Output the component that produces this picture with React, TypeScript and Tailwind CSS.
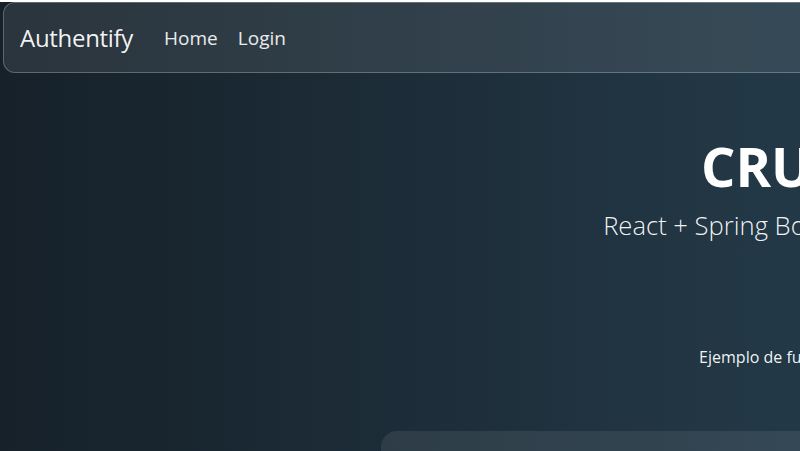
import React from 'react';

const font = { fontFamily: '"Open Sans", "Noto Sans", sans-serif' };

function Navbar() {
  return (
    <nav className="mx-[3px] mt-[2px] h-[71px] rounded-xl border border-white/25 bg-white/[0.09] flex items-center px-4">
      <span className="text-[24px] text-white/95 tracking-[-0.3px]">Authentify</span>
      <div className="flex items-center ml-[21px] pt-[1px]">
        <a className="px-[10px] text-[19px] font-medium text-white/90">Home</a>
        <a className="px-[10px] text-[19px] font-medium text-white/90">Login</a>
      </div>
    </nav>
  );
}

export default function App() {
  return (
    <div className="w-screen h-screen overflow-hidden" style={font}>
      <div className="w-[1920px] min-h-[451px] bg-gradient-to-r from-[#16212a] via-[#233846] via-40% to-[#2e4a58]">
        <Navbar />
        <main className="flex flex-col items-center text-center text-white">
          <h1 className="mt-[66px] text-[54px] leading-none font-bold">CRUD de Productos</h1>
          <p className="mt-[14px] text-[25.6px] font-light text-white/95">
            React + Spring Boot + Spring Security + JWT + MySQL + Docker
          </p>
          <p className="mt-[100px] text-[16px] text-white/95">
            Ejemplo de funcionamiento: autenticación con JWT y roles de usuarios
          </p>
          <section className="mt-[62px] w-[1158px] h-[200px] rounded-2xl bg-white/[0.08]" />
        </main>
      </div>
    </div>
  );
}
